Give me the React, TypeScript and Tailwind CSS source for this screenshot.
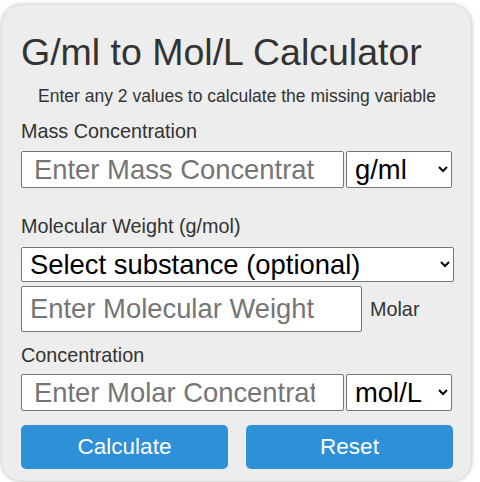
import React from "react";

export default function App() {
  const font = { fontFamily: '"Liberation Sans", Arial, sans-serif' };
  return (
    <div className="w-[480px] h-[482px] bg-white overflow-hidden" style={font}>
      <div className="ml-[2px] mt-[5px] w-[469px] rounded-[20px] bg-[#ecedec] shadow-[0_0_5px_rgba(0,0,0,0.3)] pl-[19px] pr-[18px] pt-[29px] pb-[12px] text-[#333333]">
        <h1 className="text-[37.5px] leading-[37px] font-normal">G/ml to Mol/L Calculator</h1>
        <p className="mt-[15px] text-[17.5px] leading-[20px] text-center">
          Enter any 2 values to calculate the missing variable
        </p>

        <label className="block mt-[14px] text-[19.8px] leading-[22px]">Mass Concentration</label>
        <div className="mt-[9px] flex gap-[2px]">
          <input
            type="text"
            placeholder="Enter Mass Concentration"
            className="w-[323px] h-[37px] bg-white border border-[#767676] rounded-[2px] pl-[12px] pr-[28px] text-[27.4px] text-black placeholder:text-[#757575] outline-none"
          />
          <select className="w-[106px] h-[37px] bg-white border border-[#767676] rounded-[2px] pl-[4px] text-[27.4px] text-black outline-none">
            <option>g/ml</option>
          </select>
        </div>

        <label className="block mt-[27px] text-[19.8px] leading-[22px]">Molecular Weight (g/mol)</label>
        <select className="mt-[10px] block w-[433px] h-[35px] bg-white border border-[#767676] rounded-[2px] pl-[4px] text-[27.4px] text-black outline-none">
          <option>Select substance (optional)</option>
        </select>
        <div className="mt-[4px] flex items-start">
          <input
            type="text"
            placeholder="Enter Molecular Weight"
            className="w-[341px] h-[46px] bg-white border border-[#767676] rounded-[2px] pl-[8px] pr-[4px] text-[27.4px] text-black placeholder:text-[#757575] outline-none"
          />
          <span className="ml-[8px] mt-[12px] text-[19.8px] leading-[22px]">Molar</span>
        </div>
        <label className="block mt-[12px] text-[19.8px] leading-[22px]">Concentration</label>
        <div className="mt-[8px] flex gap-[2px]">
          <input
            type="text"
            placeholder="Enter Molar Concentration"
            className="w-[323px] h-[37px] bg-white border border-[#767676] rounded-[2px] pl-[12px] pr-[28px] text-[27.4px] text-black placeholder:text-[#757575] outline-none"
          />
          <select className="w-[106px] h-[37px] bg-white border border-[#767676] rounded-[2px] pl-[4px] text-[27.4px] text-black outline-none">
            <option>mol/L</option>
          </select>
        </div>

        <div className="mt-[14px] flex gap-[18px]">
          <button className="w-[207px] h-[44px] rounded-[5px] bg-[#2e90d6] text-white text-[22.5px]">Calculate</button>
          <button className="w-[207px] h-[44px] rounded-[5px] bg-[#2e90d6] text-white text-[22.5px]">Reset</button>
        </div>
      </div>
    </div>
  );
}
